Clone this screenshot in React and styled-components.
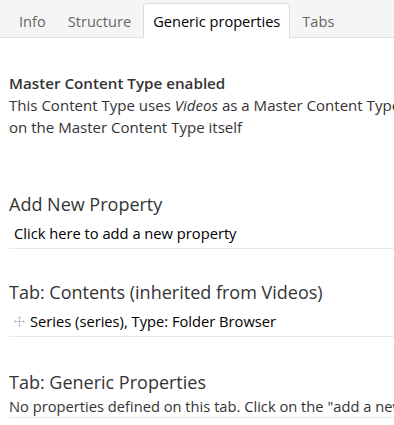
import React from "react";
import styled, { createGlobalStyle } from "styled-components";

const Global = createGlobalStyle`
  html, body { margin: 0; padding: 0; background: #fff; }
  body {
    font-family: "Open Sans", "Liberation Sans", sans-serif;
    font-size: 14px;
    line-height: 20px;
    color: #343434;
    overflow: hidden;
  }
`;

const Page = styled.div`
  width: 394px;
  height: 425px;
  overflow: hidden;
`;

const TabBar = styled.div`
  display: flex;
  align-items: flex-end;
  height: 37px;
  padding: 0 0 0 9px;
  background: #f5f5f5;
  border-bottom: 1px solid #e2e2e2;
  box-sizing: content-box;
`;

const Tab = styled.div`
  padding: 7px 9px 6px;
  margin-right: 2px;
  margin-bottom: -1px;
  font-size: 14.6px;
  line-height: 20px;
  white-space: nowrap;
  color: ${(p) => (p.$active ? "#000" : "#666")};
  background: ${(p) => (p.$active ? "#fff" : "transparent")};
  border: 1px solid ${(p) => (p.$active ? "#dcdcdc" : "transparent")};
  border-bottom-color: ${(p) => (p.$active ? "#fff" : "transparent")};
  border-radius: 4px 4px 0 0;
`;

const Content = styled.div`
  padding-left: 9px;
  width: 1100px;
`;

const Notice = styled.div`
  margin-top: 34px;
  line-height: 22px;
  font-size: 15.05px;
  white-space: nowrap;
`;

const NoticeTitle = styled.div`
  font-weight: 600;
  font-size: 15.2px;
`;

const Section = styled.div`
  margin-top: ${(p) => p.$top}px;
`;

const Heading = styled.h3`
  margin: 0;
  font-size: 18px;
  line-height: 24px;
  font-weight: 400;
  color: #343434;
`;

const Row = styled.div`
  display: flex;
  align-items: center;
  gap: 5px;
  margin-top: 7px;
  padding: 0 0 5px 5px;
  border-bottom: 1px solid #e9e9e9;
  color: #000;
  font-size: 14.7px;
  white-space: nowrap;
`;

const EmptyLine = styled.div`
  margin-top: 2px;
  border-bottom: 1px solid #e9e9e9;
  white-space: nowrap;
  font-size: 14.7px;
  line-height: 21px;
`;

const MoveIcon = () => (
  <svg width="11" height="11" viewBox="0 0 11 11" fill="#c8c8c8">
    <rect x="5" y="1.5" width="1" height="8" />
    <rect x="1.5" y="5" width="8" height="1" />
    <path d="M5.5 0 L7.5 2 L3.5 2 Z" />
    <path d="M5.5 11 L7.5 9 L3.5 9 Z" />
    <path d="M0 5.5 L2 3.5 L2 7.5 Z" />
    <path d="M11 5.5 L9 3.5 L9 7.5 Z" />
  </svg>
);

export default function App() {
  return (
    <Page>
      <Global />
      <TabBar>
        <Tab>Info</Tab>
        <Tab>Structure</Tab>
        <Tab $active>Generic properties</Tab>
        <Tab>Tabs</Tab>
      </TabBar>
      <Content>
        <Notice>
          <NoticeTitle>Master Content Type enabled</NoticeTitle>
          <div>
            This Content Type uses <em>Videos</em> as a Master Content Type. Tabs from Master Content Types are not shown and can only be edited
          </div>
          <div>on the Master Content Type itself</div>
        </Notice>

        <Section $top={54}>
          <Heading>Add New Property</Heading>
          <Row>Click here to add a new property</Row>
        </Section>

        <Section $top={31}>
          <Heading>Tab: Contents (inherited from Videos)</Heading>
          <Row>
            <MoveIcon />
            Series (series), Type: Folder Browser
          </Row>
        </Section>

        <Section $top={33}>
          <Heading>Tab: Generic Properties</Heading>
          <EmptyLine>
            No properties defined on this tab. Click on the "add a new property" link at the top to create a new property.
          </EmptyLine>
        </Section>
      </Content>
    </Page>
  );
}
